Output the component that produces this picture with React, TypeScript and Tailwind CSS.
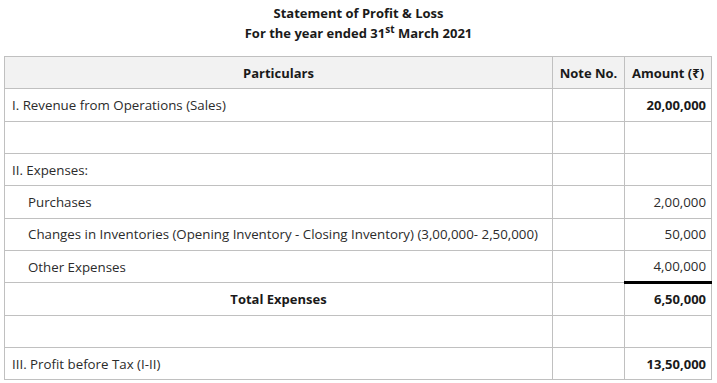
import React from "react";

const cell = "border border-[#c0c0c0] h-[32.33px] px-[7px] py-0 whitespace-nowrap";
const amt = " text-right pr-[5px]";

export default function App() {
  return (
    <div
      className="w-[717px] h-[383px] bg-white text-[#2b2b2b] text-[13.3px] leading-[18px]"
      style={{ fontFamily: '"Open Sans", "Noto Sans", sans-serif' }}
    >
      <div className="pt-[3px] text-center font-bold text-[#1a1a1a] text-[13px]">
        <div className="h-[20px] leading-[20px]">Statement of Profit &amp; Loss</div>
        <div className="h-[20px] leading-[20px]">
          For the year ended 31<span className="relative -top-[5px] text-[10px] leading-none">st</span> March 2021
        </div>
      </div>
      <div className="pl-[4px] pr-[5px] pt-[13px]">
        <table className="w-full border-collapse table-fixed">
          <colgroup>
            <col />
            <col className="w-[72px]" />
            <col className="w-[87px]" />
          </colgroup>
          <thead>
            <tr className="bg-[#f2f2f2] text-[#1a1a1a] font-bold text-[13px]">
              <th className={cell + " text-center"}>Particulars</th>
              <th className={cell + " text-center !px-[2px]"}>Note No.</th>
              <th className={cell + " text-center !px-[2px]"}>Amount (₹)</th>
            </tr>
          </thead>
          <tbody>
            <tr>
              <td className={cell}>I. Revenue from Operations (Sales)</td>
              <td className={cell}></td>
              <td className={cell + amt + " font-bold text-[#1a1a1a] text-[13px]"}>20,00,000</td>
            </tr>
            <tr>
              <td className={cell}></td>
              <td className={cell}></td>
              <td className={cell}></td>
            </tr>
            <tr>
              <td className={cell}>II. Expenses:</td>
              <td className={cell}></td>
              <td className={cell}></td>
            </tr>
            <tr>
              <td className={cell + " pl-[23px]"}>Purchases</td>
              <td className={cell}></td>
              <td className={cell + amt}>2,00,000</td>
            </tr>
            <tr>
              <td className={cell + " pl-[23px]"}>
                Changes in Inventories (Opening Inventory - Closing Inventory) (3,00,000- 2,50,000)
              </td>
              <td className={cell}></td>
              <td className={cell + amt}>50,000</td>
            </tr>
            <tr>
              <td className={cell + " pl-[23px]"}>Other Expenses</td>
              <td className={cell}></td>
              <td className={cell + amt}>4,00,000</td>
            </tr>
            <tr>
              <td className={cell + " text-center font-bold text-[#1a1a1a] text-[13px]"}>Total Expenses</td>
              <td className={cell}></td>
              <td className={cell + amt + " font-bold text-[#1a1a1a] text-[13px] border-t-[3px] border-t-black"}>6,50,000</td>
            </tr>
            <tr>
              <td className={cell}></td>
              <td className={cell}></td>
              <td className={cell}></td>
            </tr>
            <tr>
              <td className={cell}>III. Profit before Tax (I-II)</td>
              <td className={cell}></td>
              <td className={cell + amt + " font-bold text-[#1a1a1a] text-[13px]"}>13,50,000</td>
            </tr>
          </tbody>
        </table>
      </div>
    </div>
  );
}
